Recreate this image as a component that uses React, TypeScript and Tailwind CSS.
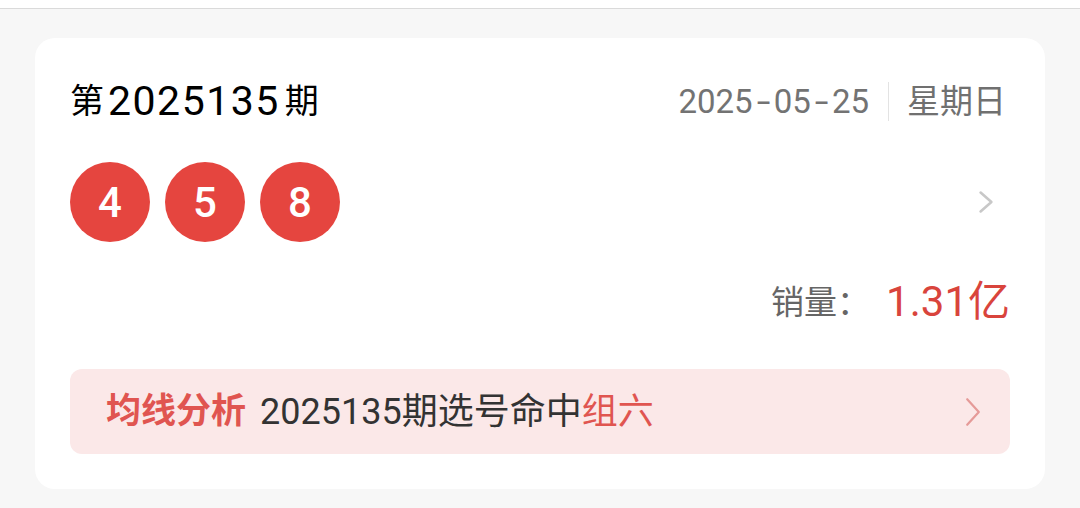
import React from "react";

const FONT = '"Roboto", "Noto Sans CJK SC", sans-serif';

function Chevron({ className, w, h, sw }: { className: string; w: number; h: number; sw: number }) {
  return (
    <svg width={w} height={h} viewBox={`0 0 ${w} ${h}`} className={className} fill="none">
      <polyline
        points={`${sw},${sw} ${w - sw},${h / 2} ${sw},${h - sw}`}
        stroke="currentColor"
        strokeWidth={sw}
        strokeLinecap="round"
        strokeLinejoin="round"
      />
    </svg>
  );
}

function Ball({ n }: { n: string }) {
  return (
    <div className="w-[80px] h-[80px] rounded-full bg-[#e5453f] flex items-center justify-center text-white text-[42px] font-medium leading-none">
      <span className="mt-[2px]">{n}</span>
    </div>
  );
}

export default function App() {
  return (
    <div className="w-[1080px] h-[508px] bg-[#f7f7f7] overflow-hidden" style={{ fontFamily: FONT }}>
      <div className="h-[9px] bg-white border-b border-[#dadada]" />
      <div className="px-[35px] pt-[29px]">
        <div className="bg-white rounded-[20px] px-[35px] pt-[42px] pb-[35px]">
          {/* Row 1 */}
          <div className="h-[42px] flex items-center justify-between">
            <div className="flex items-center text-black leading-none">
              <span className="text-[34px]">第</span>
              <span className="text-[41px] tracking-[1.5px] ml-[4px] mr-[5px]">2025135</span>
              <span className="text-[34px]">期</span>
            </div>
            <div className="flex items-center leading-none mr-[4px]">
              <span className="text-[33px] text-[#737373] flex items-center">
                2025<span className="inline-block scale-x-150 mx-[6px]">-</span>05
                <span className="inline-block scale-x-150 mx-[6px]">-</span>25
              </span>
              <div className="w-px h-[39px] bg-[#e3e3e3] ml-[19px] mr-[18px]" />
              <span className="text-[33px] text-[#707070]">星期日</span>
            </div>
          </div>
          {/* Row 2 */}
          <div className="mt-[40px] flex items-center justify-between">
            <div className="flex gap-[15px]">
              <Ball n="4" />
              <Ball n="5" />
              <Ball n="8" />
            </div>
            <Chevron className="text-[#c8c8c8] mr-[16px]" w={16} h={24} sw={2.6} />
          </div>
          {/* Row 3 */}
          <div className="mt-[40px] h-[40px] flex items-center justify-end leading-none">
            <span className="text-[33px] text-[#666666]">销量：</span>
            <span className="text-[42px] text-[#d9443c] ml-[16px]">1.31亿</span>
          </div>
          {/* Banner */}
          <div className="mt-[47px] h-[85px] rounded-[12px] bg-[#fbe8e8] flex items-center justify-between pl-[36px] pr-[29px]">
            <div className="flex items-center leading-none text-[36px] text-[#333333]">
              <span className="font-bold text-[#e05550] text-[35px]">均线分析</span>
              <span className="ml-[14px]">2025135期选号命中</span>
              <span className="text-[#e05550]">组六</span>
            </div>
            <Chevron className="text-[#e59a98]" w={16} h={30} sw={2.2} />
          </div>
        </div>
      </div>
    </div>
  );
}
